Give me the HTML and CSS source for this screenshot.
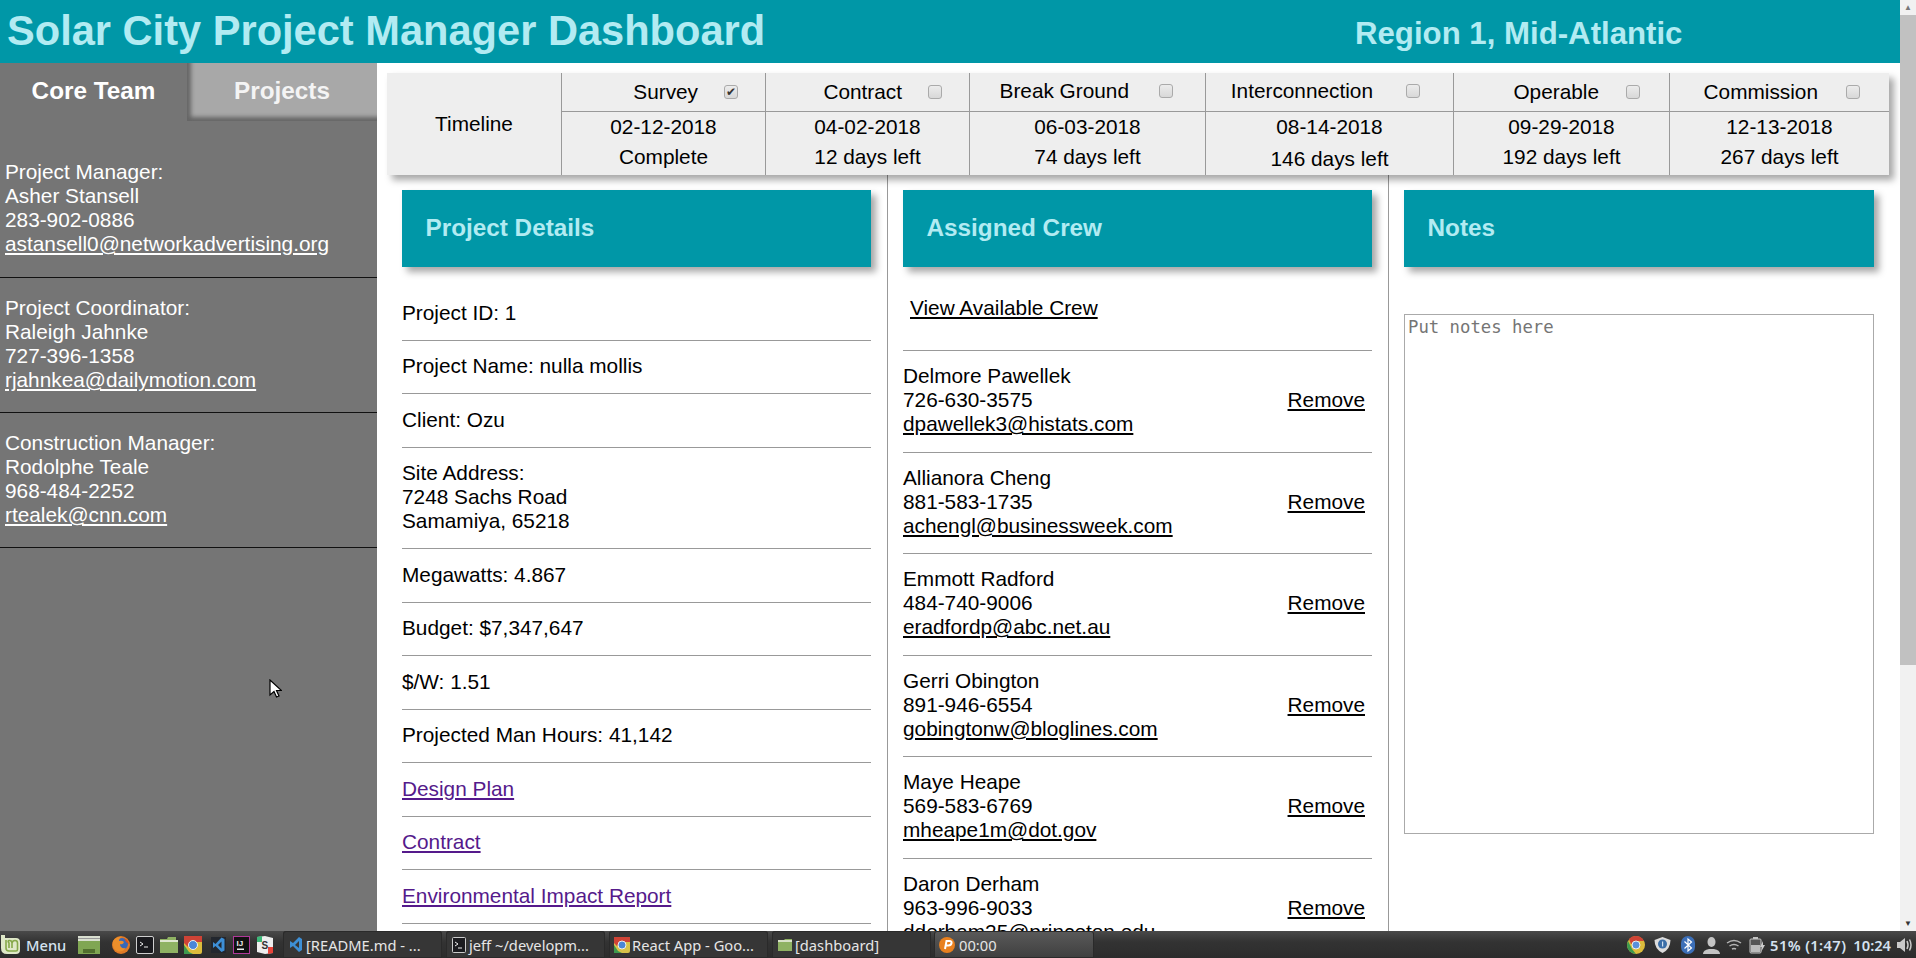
FILE: index.html
```html
<!DOCTYPE html>
<html lang="en">
<head>
  <meta charset="UTF-8">
  <title>React App</title>
  <link rel="stylesheet" href="styles.css">
</head>
<body>
  <div class="window">
    <div class="page">
      <header class="topbar">
        <h1 class="app-title">Solar City Project Manager Dashboard</h1>
        <h2 class="region">Region 1, Mid-Atlantic</h2>
      </header>
      <div class="layout">
        <aside class="sidebar">
          <div class="tabs">
            <div class="tab tab-active">Core Team</div>
            <div class="tab">Projects</div>
          </div>
          <div class="team-list">
            <div class="team-item">
              Project Manager:<br>Asher Stansell<br>283-902-0886<br>
              <a href="#">astansell0@networkadvertising.org</a>
            </div>
            <div class="team-item">
              Project Coordinator:<br>Raleigh Jahnke<br>727-396-1358<br>
              <a href="#">rjahnkea@dailymotion.com</a>
            </div>
            <div class="team-item">
              Construction Manager:<br>Rodolphe Teale<br>968-484-2252<br>
              <a href="#">rtealek@cnn.com</a>
            </div>
          </div>
        </aside>
        <main class="main">
          <div class="timeline">
            <div class="timeline-label">Timeline</div>
            <div class="step step-survey">
              <div class="step-head"><span>Survey</span><input type="checkbox" checked></div>
              <div class="step-date">02-12-2018</div>
              <div class="step-left">Complete</div>
            </div>
            <div class="step step-contract">
              <div class="step-head"><span>Contract</span><input type="checkbox"></div>
              <div class="step-date">04-02-2018</div>
              <div class="step-left">12 days left</div>
            </div>
            <div class="step step-ground">
              <div class="step-head step-head-up"><span>Break Ground</span><input type="checkbox"></div>
              <div class="step-date">06-03-2018</div>
              <div class="step-left">74 days left</div>
            </div>
            <div class="step step-inter">
              <div class="step-head step-head-up"><span>Interconnection</span><input type="checkbox"></div>
              <div class="step-date">08-14-2018</div>
              <div class="step-left step-left-low">146 days left</div>
            </div>
            <div class="step step-operable">
              <div class="step-head"><span>Operable</span><input type="checkbox"></div>
              <div class="step-date">09-29-2018</div>
              <div class="step-left">192 days left</div>
            </div>
            <div class="step step-commission">
              <div class="step-head"><span>Commission</span><input type="checkbox"></div>
              <div class="step-date">12-13-2018</div>
              <div class="step-left">267 days left</div>
            </div>
          </div>
          <div class="columns">
            <section class="column">
              <h3 class="card-title">Project Details</h3>
              <ul class="details">
                <li>Project ID: 1</li>
                <li>Project Name: nulla mollis</li>
                <li>Client: Ozu</li>
                <li>Site Address:<br>7248 Sachs Road<br>Samamiya, 65218</li>
                <li>Megawatts: 4.867</li>
                <li>Budget: $7,347,647</li>
                <li>$/W: 1.51</li>
                <li>Projected Man Hours: 41,142</li>
                <li><a href="#">Design Plan</a></li>
                <li><a href="#">Contract</a></li>
                <li><a href="#">Environmental Impact Report</a></li>
              </ul>
            </section>
            <section class="column">
              <h3 class="card-title">Assigned Crew</h3>
              <div class="crew-link"><a href="#">View Available Crew</a></div>
              <div class="crew-row">
                <div>Delmore Pawellek<br>726-630-3575<br><a href="#">dpawellek3@histats.com</a></div>
                <a class="remove" href="#">Remove</a>
              </div>
              <div class="crew-row">
                <div>Allianora Cheng<br>881-583-1735<br><a href="#">achengl@businessweek.com</a></div>
                <a class="remove" href="#">Remove</a>
              </div>
              <div class="crew-row">
                <div>Emmott Radford<br>484-740-9006<br><a href="#">eradfordp@abc.net.au</a></div>
                <a class="remove" href="#">Remove</a>
              </div>
              <div class="crew-row">
                <div>Gerri Obington<br>891-946-6554<br><a href="#">gobingtonw@bloglines.com</a></div>
                <a class="remove" href="#">Remove</a>
              </div>
              <div class="crew-row">
                <div>Maye Heape<br>569-583-6769<br><a href="#">mheape1m@dot.gov</a></div>
                <a class="remove" href="#">Remove</a>
              </div>
              <div class="crew-row">
                <div>Daron Derham<br>963-996-9033<br><a href="#">dderham25@princeton.edu</a></div>
                <a class="remove" href="#">Remove</a>
              </div>
            </section>
            <section class="column column-last">
              <h3 class="card-title">Notes</h3>
              <textarea class="notes" placeholder="Put notes here"></textarea>
            </section>
          </div>
        </main>
      </div>
      <!-- mouse pointer from the screenshot -->
      <svg class="pointer" width="13" height="20" viewBox="0 0 13 20">
        <path d="M1 1v15l4-3.500 2.500 5.500 2.500-1-2.500-5.500h5z" fill="#fff" stroke="#000" stroke-width="1.200"/>
      </svg>
    </div>
    <div class="scrollbar">
      <div class="scroll-arrow">▲</div>
      <div class="scroll-thumb"></div>
      <div class="scroll-arrow scroll-arrow-down">▼</div>
    </div>
  </div>

  <footer class="taskbar">
    <div class="menu-btn">
      <svg width="21" height="21" viewBox="0 0 21 21"><path d="M1 1h4v3h11q4 0 4 4v8q0 4-4 4H7q-6 0-6-6z" fill="#dfe8c8"/><path d="M6 6v8q0 3 3 3h7q1.500 0 1.500-1.500V9q0-2.500-2.500-2.500T12 9v5M12 9q0-2.500-2.500-2.500T9 9v5" fill="none" stroke="#86a84a" stroke-width="1.600"/></svg>
      <span>Menu</span>
    </div>
    <div class="launchers">
      <svg class="launcher-files" width="22" height="20" viewBox="0 0 22 20"><rect x="0" y="1" width="22" height="5" fill="#d9dfd0"/><rect x="0" y="3" width="22" height="1" fill="#999"/><rect x="0" y="6" width="22" height="13" fill="#80a653"/><rect x="5" y="14" width="12" height="4" fill="#52702f"/></svg>
      <svg width="18" height="20" viewBox="0 0 18 20"><circle cx="9" cy="10" r="9" fill="#e07a26"/><circle cx="10" cy="9" r="6" fill="#3868b8"/><path d="M1 6q4-5 9-4-3 1-3 4 3-1 5 1-1 3-4 2 0 5 6 4-4 5-9 3T1 6z" fill="#ec8f2b"/><path d="M12 3q4 2 5 6l-3-2z" fill="#d8501f"/></svg>
      <svg width="18" height="20" viewBox="0 0 18 20"><rect x="0.500" y="1.500" width="17" height="17" rx="1.500" fill="#1a1a1e" stroke="#cfcfcf"/><path d="M4 7l3 2-3 2M8 12h4" fill="none" stroke="#eee"/></svg>
      <svg width="18" height="20" viewBox="0 0 18 20"><path d="M0 4h7l1-2h8v3h2v13H0z" fill="#8fb263"/><rect x="0" y="5" width="18" height="2" fill="#dfe6d0"/></svg>
      <svg width="18" height="20" viewBox="0 0 18 20"><rect x="0" y="1" width="18" height="18" rx="2" fill="#dcbc3c"/><path d="M0 1h18v6H9L4 12 0 8z" fill="#cf4336"/><path d="M0 19V10l5 7 4 2z" fill="#3d9a4f"/><circle cx="9" cy="10" r="4.500" fill="#4a86d8" stroke="#eee"/></svg>
      <svg class="launcher-code" width="15" height="20" viewBox="0 0 15 20"><rect x="0" y="2" width="15" height="16" fill="#23272e"/><path d="M10.500 2.500L4.500 9 2 7v6l2.500-2 6 6 3-1.500V4zM10.500 6.500v7L7 10z" fill="#3d8fd6"/></svg>
      <svg class="launcher-ij" width="17" height="20" viewBox="0 0 17 20"><rect x="0.500" y="1.500" width="16" height="17" fill="#111" stroke="#b0389a"/><rect x="4" y="13.500" width="7" height="1.500" fill="#eee"/><text class="ij" x="3.500" y="11">IJ</text></svg>
      <svg class="launcher-sublime" width="16" height="20" viewBox="0 0 16 20"><path d="M0 2l8-1 8 2v15l-8 1-8-2z" fill="#eee"/><path d="M0 2l5-1v6H0z" fill="#3cb878"/><path d="M11 19l5-1v-6h-5z" fill="#e8443a"/><text class="sl" x="4.500" y="14">S</text></svg>
    </div>
    <div class="task">
      <svg width="16" height="18" viewBox="0 0 16 18"><path d="M11 1L5 7 2 5v7l3-2 6 6 3-2V3zM11 5v7L7 9z" fill="#3d8fd6"/></svg>
      <span>[README.md - ...</span>
    </div>
    <div class="task">
      <svg width="16" height="18" viewBox="0 0 16 18"><rect x="1.500" y="1.500" width="13" height="15" rx="1" fill="#1c1c20" stroke="#ccc"/><path d="M4 6l3 2-3 2M7 12h4" fill="none" stroke="#eee"/></svg>
      <span>jeff ~/developm...</span>
    </div>
    <div class="task">
      <svg width="16" height="18" viewBox="0 0 16 18"><rect x="0" y="1" width="16" height="16" rx="2" fill="#d8c24a"/><path d="M0 1h16v5H8L3 10 0 7z" fill="#cf4336"/><path d="M0 17V9l4 6 4 2z" fill="#3d9a4f"/><circle cx="8" cy="9" r="4" fill="#4a86d8" stroke="#eee"/></svg>
      <span>React App - Goo...</span>
    </div>
    <div class="task">
      <svg width="16" height="18" viewBox="0 0 16 18"><path d="M1 4h6l1-1h7v12H1z" fill="#8fb263"/><rect x="1" y="4" width="14" height="2" fill="#d9e2c8"/></svg>
      <span>[dashboard]</span>
    </div>
    <div class="task task-active">
      <svg width="16" height="18" viewBox="0 0 16 18"><circle cx="8" cy="9" r="8" fill="#e8801f"/><path d="M6 13l1.500-8h3q2.500 0 2 2.200T9.500 9.500H7.500" fill="none" stroke="#fff" stroke-width="2"/></svg>
      <span>00:00</span>
    </div>
    <div class="tray">
      <svg class="tray-chrome" width="18" height="18" viewBox="0 0 18 18"><circle cx="9" cy="9" r="9" fill="#dcbc3c"/><path d="M9 0a9 9 0 0 1 8 5H9L4 8 2 3a9 9 0 0 1 7-3z" fill="#cf4336"/><path d="M1 5l4 8 4 5a9 9 0 0 1-8-13z" fill="#3d9a4f"/><circle cx="9" cy="9" r="4" fill="#5a90dc" stroke="#eee"/></svg>
      <svg class="tray-shield" width="17" height="18" viewBox="0 0 17 18"><path d="M8.500 1l8 3q0 9-8 13-8-4-8-13z" fill="#dcdcdc"/><circle cx="8.500" cy="8" r="4.500" fill="#3a6ea8"/><rect x="8" y="5.500" width="1.200" height="5" fill="#cfe0f0"/></svg>
      <svg class="tray-blue" width="14" height="18" viewBox="0 0 14 18"><rect x="0" y="0" width="14" height="18" rx="7" fill="#3c6fb8"/><path d="M3.500 5.500l7 6.500-3.500 3V3l3.500 3-7 6.500" fill="none" stroke="#fff" stroke-width="1.200"/></svg>
      <svg class="tray-person" width="17" height="18" viewBox="0 0 17 18"><ellipse cx="8.500" cy="6" rx="4" ry="5" fill="#c4c4c4"/><path d="M0 18q0-4 6-5h5q6 1 6 5z" fill="#c4c4c4"/></svg>
      <svg class="tray-wifi" width="16" height="14" viewBox="0 0 16 14"><path d="M1 5q7-5 14 0M3.500 8q4.500-3 9 0M6 11q2-1 4 0" fill="none" stroke="#b5b5b5" stroke-width="1.500"/></svg>
      <svg class="tray-battery" width="17" height="18" viewBox="0 0 17 18"><rect x="1" y="3" width="11" height="14" rx="1" fill="#555" stroke="#c4c4c4"/><rect x="4" y="1" width="5" height="2" fill="#c4c4c4"/><rect x="2" y="9" width="9" height="7" fill="#bbb"/><path d="M14 5l-3 6h2l-1 5 4-7h-2z" fill="#ccc"/></svg>
      <span class="tray-text tray-power">51% (1:47)</span>
      <span class="tray-text tray-clock">10:24</span>
      <svg class="tray-sound" width="17" height="16" viewBox="0 0 17 16"><path d="M0 5h3l5-4v14l-5-4H0z" fill="#c9c9c9"/><path d="M10 4q2 4 0 8M12.500 2.500q3 5.500 0 11" fill="none" stroke="#c9c9c9" stroke-width="1.500"/></svg>
    </div>
  </footer>
</body>
</html>
```

FILE: styles.css
```css
* {
  box-sizing: border-box;
}
html, body {
  height: 100%;
}
body {
  margin: 0;
  display: flex;
  flex-direction: column;
  overflow: hidden;
  font-family: "Liberation Sans", Arial, sans-serif;
  font-size: 20.8px;
  line-height: 24px;
  color: #000;
  background-color: #fff;
}
a {
  color: inherit;
}

/* browser viewport */
.window {
  flex: 1;
  min-height: 0;
  display: flex;
}
.page {
  flex: 1;
  min-width: 0;
  position: relative;
  display: flex;
  flex-direction: column;
}
.scrollbar {
  width: 16px;
  background-color: #f1f1f1;
  display: flex;
  flex-direction: column;
}
.scroll-arrow {
  height: 15px;
  font-size: 8px;
  line-height: 15px;
  text-align: center;
  color: #777;
}
.scroll-arrow-down {
  margin-top: auto;
  color: #333;
}
.scroll-thumb {
  height: 650px;
  background-color: #c1c1c1;
}

/* top bar */
.topbar {
  height: 63px;
  flex-shrink: 0;
  background-color: #0097a7;
  color: #b2ebf2;
  display: flex;
  align-items: center;
  padding-left: 7px;
}
.app-title {
  margin: 0 0 1px;
  font-size: 41.6px;
  font-weight: 700;
  line-height: 58px;
  width: 1348px;
  flex-shrink: 0;
}
.region {
  margin: 4px 0 0;
  font-size: 31.2px;
  font-weight: 700;
}
.layout {
  flex: 1;
  min-height: 0;
  display: flex;
}

/* sidebar */
.sidebar {
  width: 377px;
  flex-shrink: 0;
  background-color: #757575;
  color: #fff;
}
.tabs {
  display: flex;
  height: 58px;
}
.tab {
  width: 190px;
  font-size: 24.3px;
  font-weight: 700;
  text-align: center;
  padding-top: 16px;
  background-color: #a8a8a8;
  color: #f4f4f4;
  box-shadow: inset 5px -5px 4px -1px #666;
}
.tab-active {
  width: 187px;
  background-color: #757575;
  color: #fff;
  box-shadow: none;
}
.team-list {
  padding-top: 22px;
}
.team-item {
  height: 135px;
  padding: 17px 5px 0;
  border-bottom: 1px solid #111;
}
.team-item + .team-item {
  padding-top: 18px;
}

/* timeline */
.main {
  flex: 1;
  min-width: 0;
  padding: 10px 0 0 10px;
  display: flex;
  flex-direction: column;
  overflow: hidden;
}
.timeline {
  height: 102px;
  width: 1502px;
  flex-shrink: 0;
  display: flex;
  background-color: #eee;
  box-shadow: 5px 5px 7px rgba(0, 0, 0, 0.35);
  position: relative;
  text-align: center;
}
.timeline-label {
  width: 174px;
  padding-top: 39px;
}
.step {
  border-left: 1px solid #999;
}
.step-head {
  height: 39px;
  border-bottom: 1px solid #999;
  display: flex;
  align-items: center;
  justify-content: flex-end;
}
.step-survey { width: 204px; }
.step-survey .step-head { gap: 26px; padding-right: 27px; }
.step-contract { width: 204px; }
.step-contract .step-head { gap: 26px; padding-right: 27px; }
.step-ground { width: 236px; }
.step-ground .step-head { gap: 30px; padding-right: 32px; }
.step-inter { width: 248px; }
.step-inter .step-head { gap: 33px; padding-right: 33px; }
.step-operable { width: 216px; }
.step-operable .step-head { gap: 27px; padding-right: 29px; }
.step-commission { width: 220px; }
.step-commission .step-head { gap: 28px; padding-right: 29px; }
.step-head-up {
  padding-bottom: 3px;
}
.step-date {
  height: 32px;
  line-height: 30px;
}
.step-left {
  padding-top: 1px;
}
.step-left-low {
  padding-top: 3px;
}
.step-head input {
  flex-shrink: 0;
  appearance: none;
  width: 14px;
  height: 14px;
  margin: 0;
  border: 1px solid #aaa;
  border-radius: 3px;
  background: linear-gradient(#ececec, #d8d8d8);
  position: relative;
}
.step-head input:checked::after {
  content: "✔";
  position: absolute;
  left: 1px;
  top: -1px;
  font: 12px/14px "DejaVu Sans", sans-serif;
  color: #333;
}

/* three columns */
.columns {
  flex: 1;
  min-height: 0;
  display: flex;
  overflow: hidden;
}
.column {
  width: 501px;
  flex-shrink: 0;
  padding: 15px 16px 0 15px;
  border-right: 1px solid #999;
}
.column-last {
  border-right: none;
}
.card-title {
  margin: 0;
  height: 77px;
  padding-left: 23.5px;
  background-color: #0097a7;
  color: #b2ebf2;
  font-size: 24.3px;
  line-height: 76px;
  font-weight: 700;
  box-shadow: 5px 5px 7px rgba(0, 0, 0, 0.35);
}

/* project details */
.details {
  list-style: none;
  margin: 0;
  padding: 20px 0 0;
}
.details li {
  padding: 13.5px 0 15px;
  border-bottom: 1px solid #999;
}
.details a {
  color: #551a8b;
}

/* crew */
.crew-link {
  height: 84px;
  padding: 29px 0 0 7px;
  border-bottom: 1px solid #999;
}
.crew-row {
  height: 101.500px;
  padding: 13px 7px 0 0;
  border-bottom: 1px solid #999;
  display: flex;
  justify-content: space-between;
  align-items: flex-start;
}
.remove {
  margin-top: 24px;
}

/* notes */
.notes {
  display: block;
  width: 100%;
  height: 520px;
  margin-top: 47px;
  padding: 2px 3px;
  border: 1px solid #aaa;
  font-family: "DejaVu Sans Mono", monospace;
  font-size: 17.3px;
  line-height: 20px;
  resize: none;
}

.pointer {
  position: absolute;
  left: 269px;
  top: 679px;
}

/* desktop panel */
.taskbar {
  height: 27px;
  flex-shrink: 0;
  display: flex;
  align-items: center;
  background: linear-gradient(#4a4a4a, #333 40%, #2c2c2c);
  color: #e6e6e6;
  font-family: "Noto Sans", sans-serif;
  font-size: 14.7px;
  line-height: 20px;
}
.taskbar svg {
  display: block;
  flex-shrink: 0;
}
.menu-btn {
  width: 78px;
  display: flex;
  align-items: center;
  gap: 5px;
  color: #d5e2f0;
  font-weight: 500;
}
.launchers {
  width: 205px;
  display: flex;
  align-items: center;
  gap: 6px;
}
.launcher-files {
  margin-right: 6px;
}
.launcher-code {
  margin-left: 3px;
}
.launcher-ij {
  margin-left: 1px;
}
.launcher-sublime {
  margin-left: 1px;
}
.task {
  width: 159px;
  height: 27px;
  margin-right: 4px;
  padding-left: 5px;
  display: flex;
  align-items: center;
  gap: 2px;
  background-color: #363636;
  border-radius: 3px 3px 0 0;
  box-shadow: inset 0 0 0 1px #2a2a2a;
  white-space: nowrap;
}
.task-active {
  margin-left: -1px;
  width: 160px;
  gap: 4px;
  background: linear-gradient(#5a5a5a, #3f3f3f);
}
.tray {
  margin-left: auto;
  display: flex;
  align-items: center;
  padding-right: 2px;
}
.tray-shield { margin-left: 9px; }
.tray-blue { margin-left: 10px; }
.tray-person { margin-left: 8px; }
.tray-wifi { margin-left: 6px; }
.tray-battery { margin-left: 7px; }
.tray-text {
  color: #d5e2f0;
  font-weight: 600;
  white-space: nowrap;
}
.tray-power {
  margin-left: 4px;
  letter-spacing: 0.4px;
}
.tray-clock { margin-left: 7px; }
.tray-sound { margin-left: 6px; }
.ij {
  font: 700 8px "Liberation Sans", sans-serif;
  fill: #eee;
}
.sl {
  font: 700 10px "Liberation Sans", sans-serif;
  fill: #333;
}
```
